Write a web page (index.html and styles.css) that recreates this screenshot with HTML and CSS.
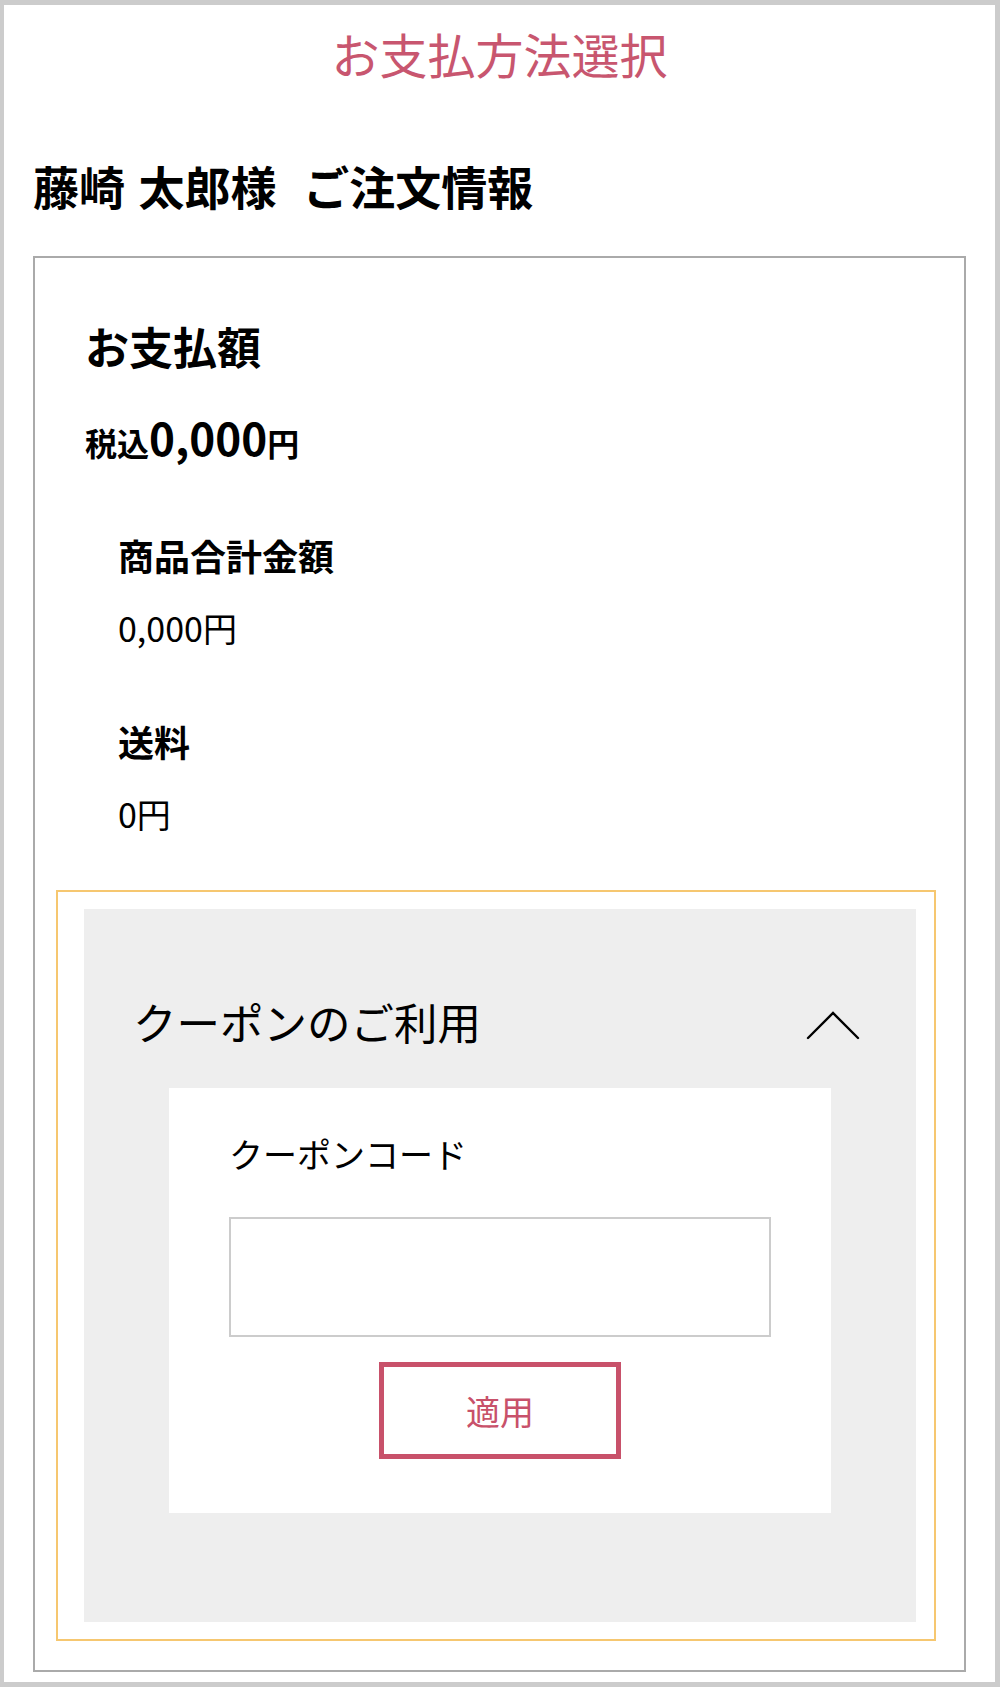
FILE: index.html
```html
<!DOCTYPE html>
<html lang="ja">
<head>
<meta charset="utf-8">
<title>お支払方法選択</title>
<link rel="stylesheet" href="styles.css">
</head>
<body>
<div class="page">
  <h1 class="title">お支払方法選択</h1>
  <h2 class="heading">藤崎 太郎様&nbsp; ご注文情報</h2>
  <section class="order-box">
    <h3 class="pay-title">お支払額</h3>
    <p class="pay-total"><span class="pay-small">税込</span><span class="pay-big">0,000</span><span class="pay-small">円</span></p>
    <dl class="breakdown">
      <dt class="bd-label">商品合計金額</dt>
      <dd class="bd-value">0,000円</dd>
      <dt class="bd-label bd-next">送料</dt>
      <dd class="bd-value">0円</dd>
    </dl>
    <div class="coupon-outline">
      <div class="coupon">
        <div class="coupon-head">
          <span class="coupon-title">クーポンのご利用</span>
          <svg class="chevron" width="54" height="30" viewBox="0 0 54 30" aria-hidden="true">
            <polyline points="2,27 27,2 52,27" fill="none" stroke="#000" stroke-width="2.4" stroke-linecap="round" stroke-linejoin="miter"/>
          </svg>
        </div>
        <div class="coupon-card">
          <label class="coupon-label" for="coupon-code">クーポンコード</label>
          <input class="coupon-input" id="coupon-code" type="text">
          <button class="apply-btn" type="button">適用</button>
        </div>
      </div>
    </div>
  </section>
</div>
</body>
</html>
```

FILE: styles.css
```css
* {
  box-sizing: border-box;
}

html, body {
  margin: 0;
  padding: 0;
  background: #fff;
}

body {
  font-family: "Noto Sans CJK JP", "Noto Sans", sans-serif;
  color: #000;
}

.page {
  width: 1000px;
  border-style: solid;
  border-color: #cccccc;
  border-width: 5px 5px 5px 4px;
  padding: 24px 29px 10px 29px;
}

.title {
  margin: 0;
  font-size: 48px;
  line-height: 48px;
  font-weight: 400;
  color: #c8566f;
  text-align: center;
}

.heading {
  margin: 86px 0 0 0;
  font-size: 46px;
  line-height: 44px;
  font-weight: 700;
  word-spacing: 3px;
}

.order-box {
  margin-top: 49px;
  border: 2px solid #aaaaaa;
  padding: 66px 28px 29px 21px;
}

.pay-title {
  margin: 0;
  padding-left: 29px;
  font-size: 44px;
  line-height: 44px;
  font-weight: 700;
}

.pay-total {
  margin: 46px 0 0 0;
  padding-left: 29px;
  font-size: 44px;
  line-height: 46px;
  font-weight: 700;
}

.pay-small {
  font-size: 32px;
  line-height: 32px;
}

.pay-big {
  font-size: 44px;
  line-height: 44px;
}

.breakdown {
  margin: 77px 0 0 0;
  padding-left: 62px;
}

.bd-label {
  margin: 0;
  font-size: 36px;
  line-height: 36px;
  font-weight: 700;
}

.bd-next {
  margin-top: 78px;
}

.bd-value {
  margin: 38px 0 0 0;
  font-size: 34px;
  line-height: 34px;
  font-weight: 400;
}

.coupon-outline {
  margin-top: 59px;
  border: 2px solid #f6c770;
  padding: 17px 18px 17px 26px;
}

.coupon {
  background: #eeeeee;
  padding: 91px 0 109px 0;
}

.coupon-head {
  display: flex;
  align-items: center;
  justify-content: space-between;
  padding: 0 56px 0 49px;
  height: 43px;
}

.coupon-title {
  font-size: 43.5px;
  line-height: 43px;
  font-weight: 400;
}

.chevron {
  display: block;
  margin-top: 8px;
}

.coupon-card {
  margin: 45px 85px 0 85px;
  background: #fff;
  padding: 49px 60px 54px 60px;
  display: flex;
  flex-direction: column;
  align-items: center;
}

.coupon-label {
  align-self: stretch;
  display: block;
  font-size: 34px;
  line-height: 33px;
}

.coupon-input {
  display: block;
  width: 100%;
  height: 120px;
  margin: 47px 0 0 0;
  border: 2px solid #cccccc;
  border-radius: 0;
  background: #fff;
  font-family: inherit;
  font-size: 30px;
  padding: 0 16px;
  outline: none;
}

.apply-btn {
  margin-top: 25px;
  width: 242px;
  height: 97px;
  border: 5px solid #c8516a;
  background: #fff;
  color: #c8516a;
  font-family: inherit;
  font-size: 34px;
  line-height: 34px;
  font-weight: 400;
  padding: 0;
  display: flex;
  align-items: center;
  justify-content: center;
  cursor: pointer;
}
```
